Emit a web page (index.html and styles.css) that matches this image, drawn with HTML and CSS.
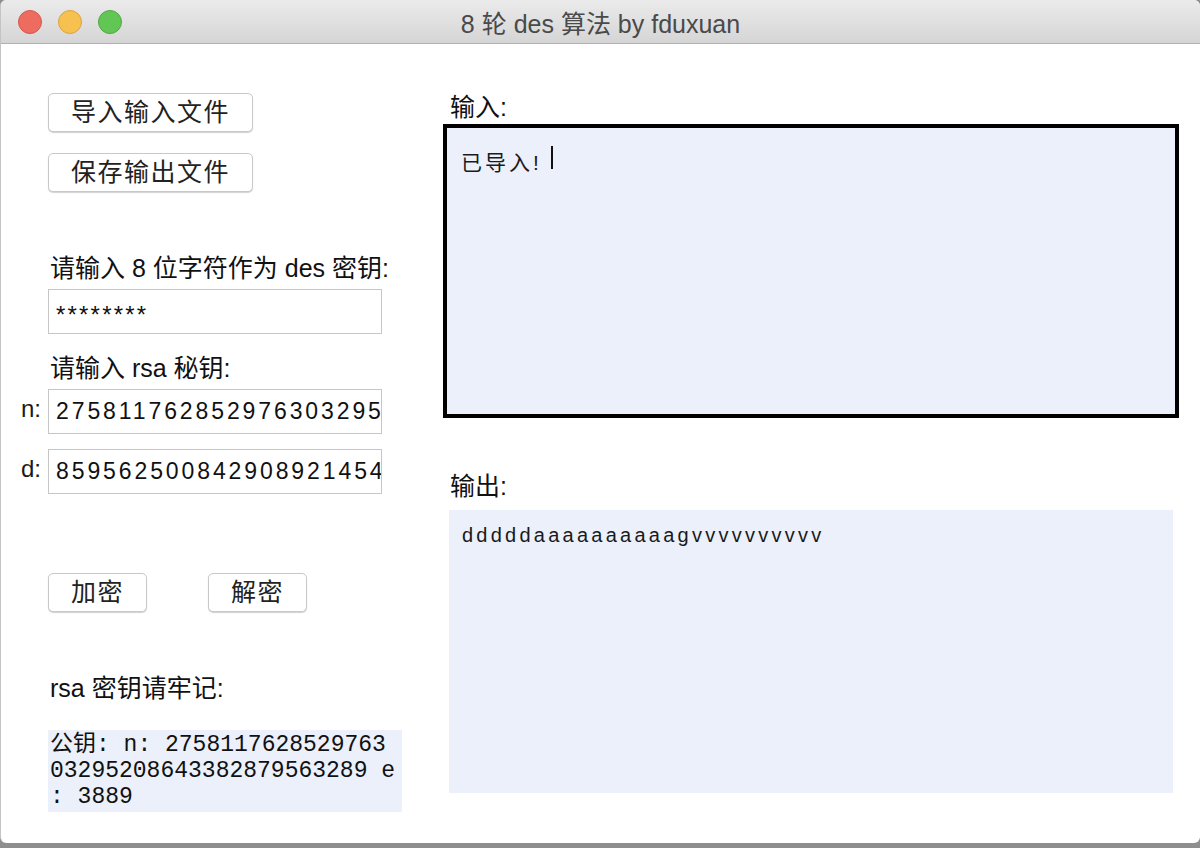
FILE: index.html
```html
<!DOCTYPE html>
<html lang="zh">
<head>
<meta charset="utf-8">
<title>8轮des算法 by fduxuan</title>
<link rel="stylesheet" href="styles.css">
</head>
<body>
<div class="window">
  <div class="titlebar">
    <div class="lights">
      <span class="light red"></span>
      <span class="light yellow"></span>
      <span class="light green"></span>
    </div>
    <div class="title">8 轮 des 算法 by fduxuan</div>
  </div>
  <div class="content">
    <div class="left">
      <button class="btn wide first">导入输入文件</button>
      <button class="btn wide second">保存输出文件</button>
      <div class="label des-label">请输入 8 位字符作为 des 密钥:</div>
      <div class="field"><div class="entry mask">********</div></div>
      <div class="label rsa-label">请输入 rsa 秘钥:</div>
      <div class="field"><span class="tag">n:</span><div class="entry">275811762852976303295208643382879563289</div></div>
      <div class="field gap"><span class="tag">d:</span><div class="entry">85956250084290892145437719204657</div></div>
      <div class="actions">
        <button class="btn small">加密</button>
        <button class="btn small">解密</button>
      </div>
      <div class="label remember">rsa 密钥请牢记:</div>
      <div class="pubkey">公钥: n: 2758117628529763<br>03295208643382879563289 e<br>: 3889</div>
    </div>
    <div class="right">
      <div class="label in-label">输入:</div>
      <div class="textbox input-box"><span class="txt">已导入!</span><span class="caret"></span></div>
      <div class="label out-label">输出:</div>
      <div class="textbox output-box"><span class="txt">dddddaaaaaaaaaagvvvvvvvvvv</span></div>
    </div>
  </div>
</div>
<div class="desktop"></div>
</body>
</html>
```

FILE: styles.css
```css
html, body {
  margin: 0;
  padding: 0;
}
body {
  width: 1200px;
  height: 848px;
  overflow: hidden;
  background: #8e8e8e;
  font-family: "Liberation Sans", "Noto Sans CJK SC", sans-serif;
  color: #1a1a1a;
}
.window {
  width: 1200px;
  height: 843px;
  background: #ffffff;
  border-radius: 6px;
  overflow: hidden;
  box-sizing: border-box;
  border-left: 1px solid #c4c4c4;
  display: flex;
  flex-direction: column;
}
.titlebar {
  height: 43px;
  flex: 0 0 43px;
  background: linear-gradient(#ebebeb, #d5d5d5);
  border-bottom: 1px solid #b1b1b1;
  display: flex;
  align-items: center;
  justify-content: center;
  position: relative;
}
.lights {
  position: absolute;
  left: 17px;
  top: 10px;
  display: flex;
  gap: 16px;
}
.light {
  width: 24px;
  height: 24px;
  border-radius: 50%;
  box-sizing: border-box;
}
.red { background: #ee6b60; border: 1px solid #d5584d; }
.yellow { background: #f6c14f; border: 1px solid #d9a441; }
.green { background: #62c655; border: 1px solid #4fa93f; }
.title {
  font-size: 25px;
  color: #4a4a4a;
  margin-top: 1px;
}
.content {
  flex: 1;
  display: flex;
}
.left {
  width: 395px;
  flex: 0 0 395px;
  padding-left: 47px;
  display: flex;
  flex-direction: column;
  align-items: flex-start;
}
.btn {
  font-family: "Liberation Sans", "Noto Sans CJK SC", sans-serif;
  font-size: 25px;
  color: #222;
  background: #fff;
  border: 1px solid #c9c9c9;
  border-radius: 5px;
  box-shadow: 0 1px 1px rgba(0,0,0,0.18);
  height: 39px;
  padding: 0;
  letter-spacing: 1.5px;
  line-height: 37px;
}
.wide { width: 205px; }
.first { margin-top: 49px; }
.second { margin-top: 21px; }
.small { width: 99px; }
.label {
  font-size: 25px;
  height: 30px;
  line-height: 30px;
  white-space: nowrap;
  color: #111;
}
.des-label { margin-top: 61px; margin-left: 2px; }
.rsa-label { margin-top: 19px; margin-left: 2px; }
.field {
  display: flex;
  align-items: center;
  margin-top: 6px;
}
.field.gap { margin-top: 15px; }
.tag {
  width: 29px;
  margin-left: -29px;
  font-size: 24px;
  text-align: left;
  padding-left: 2px;
  box-sizing: border-box;
  margin-top: -6px;
}
.entry {
  width: 334px;
  height: 45px;
  box-sizing: border-box;
  border: 1px solid #c6c6c6;
  background: #fff;
  font-size: 23px;
  letter-spacing: 2.9px;
  line-height: 43px;
  padding-left: 7px;
  white-space: nowrap;
  overflow: hidden;
  color: #111;
}
.entry.mask {
  font-size: 24px;
  letter-spacing: 2.2px;
  line-height: 50px;
}
.actions {
  display: flex;
  gap: 61px;
  margin-top: 79px;
}
.remember { margin-top: 61px; margin-left: 2px; }
.pubkey {
  margin-top: 27px;
  width: 354px;
  height: 82px;
  box-sizing: border-box;
  background: #ebf0fb;
  font-family: "Liberation Mono", "Noto Sans CJK SC", monospace;
  font-size: 23px;
  line-height: 26px;
  padding: 2px 0 0 2px;
  color: #111;
  white-space: nowrap;
}
.right {
  flex: 1;
  display: flex;
  flex-direction: column;
  align-items: flex-start;
}
.in-label { margin-top: 48px; margin-left: 7px; }
.textbox {
  background: #ebf0fb;
  box-sizing: border-box;
  font-family: "Liberation Sans", "Noto Sans CJK SC", sans-serif;
  font-size: 20px;
  color: #1a1a1a;
  display: flex;
  align-items: flex-start;
}
.input-box {
  margin-top: 2px;
  width: 736px;
  height: 294px;
  border: 4px solid #000;
  padding: 18px 0 0 14px;
  font-size: 21px;
  letter-spacing: 3px;
}
.caret {
  display: inline-block;
  width: 2px;
  height: 23px;
  background: #111;
  margin-left: 9px;
  margin-top: 0;
}
.out-label { margin-top: 53px; margin-left: 7px; }
.output-box {
  margin-top: 9px;
  margin-left: 6px;
  width: 724px;
  height: 283px;
  padding: 14px 0 0 13px;
  letter-spacing: 3.25px;
}
.desktop {
  height: 5px;
}
```
